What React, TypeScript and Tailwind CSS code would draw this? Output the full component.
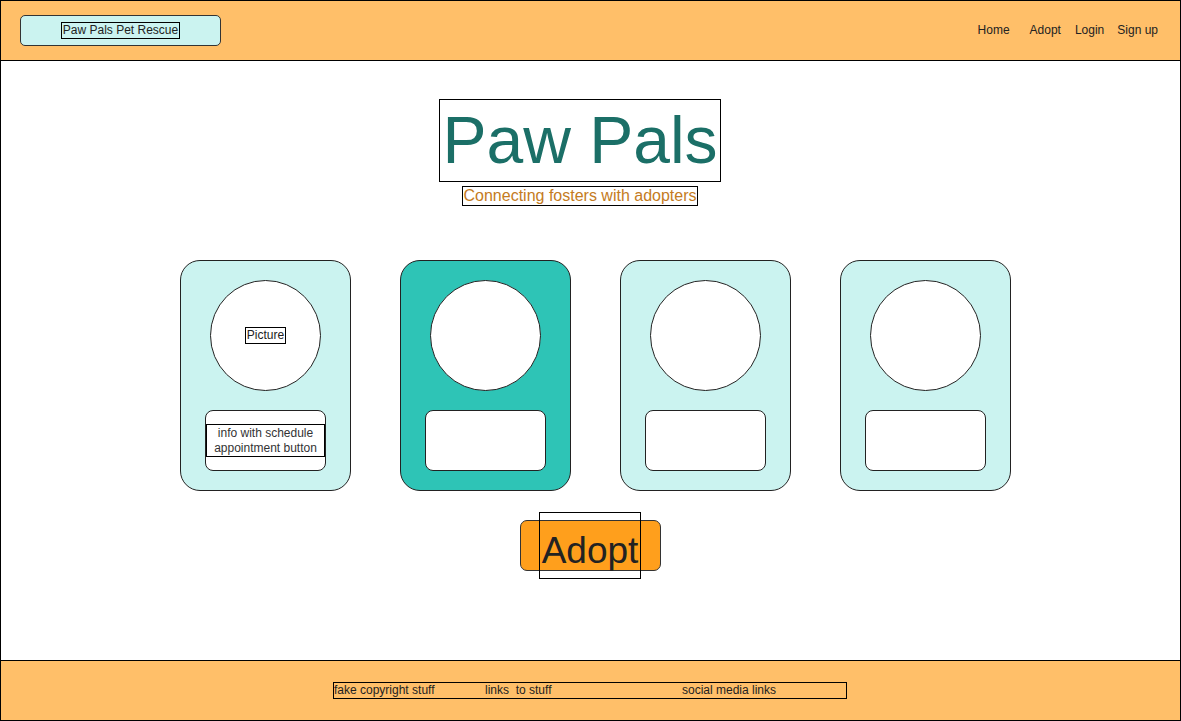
import React from 'react';

const navItems = [
  { label: 'Home', cls: 'mr-[20px]' },
  { label: 'Adopt', cls: 'mr-[14px]' },
  { label: 'Login', cls: 'mr-[13px]' },
  { label: 'Sign up', cls: '' },
];

function PetCard({ highlight, first }: { highlight?: boolean; first?: boolean }) {
  return (
    <div
      className={`w-[171px] h-[231px] rounded-[20px] border border-[#222] pt-[19px] flex flex-col items-center ${
        highlight ? 'bg-[#2ec4b6]' : 'bg-[#cbf3f0]'
      }`}
    >
      <div className="w-[111px] h-[111px] rounded-full border border-[#222] bg-white flex items-center justify-center">
        {first && (
          <span className="border border-black px-[1px] text-[12px] leading-[15px] text-[#222]">Picture</span>
        )}
      </div>
      <div className="mt-[19px] w-[121px] h-[61px] rounded-[8px] border border-[#222] bg-white flex items-center">
        {first && (
          <div className="w-full border border-black text-center text-[12px] leading-[15px] text-[#333] pt-[1px]">
            info with schedule
            <br />
            appointment button
          </div>
        )}
      </div>
    </div>
  );
}

export default function App() {
  return (
    <div
      className="w-[1181px] h-[721px] border border-black bg-white flex flex-col overflow-hidden"
      style={{ fontFamily: '"Liberation Sans", Arial, sans-serif' }}
    >
      {/* Header */}
      <header className="h-[60px] shrink-0 bg-[#ffbf69] border-b border-black flex items-center pl-[19px] pr-[22px]">
        <div className="w-[201px] h-[31px] rounded-[5px] border border-[#333] bg-[#cbf3f0] flex items-center justify-center">
          <span className="border border-black px-[1px] text-[12px] leading-[15px] text-[#222]">
            Paw Pals Pet Rescue
          </span>
        </div>
        <nav className="ml-auto flex items-center pb-[2px] text-[12px] text-[#222]">
          {navItems.map((item) => (
            <span key={item.label} className={item.cls}>
              {item.label}
            </span>
          ))}
        </nav>
      </header>

      {/* Main */}
      <main className="flex-1 flex flex-col">
        <div className="ml-[438px] mt-[38px] w-[282px] h-[83px] border border-black flex items-center justify-center">
          <h1 className="text-[66px] leading-[81px] text-[#1b6f67]">Paw Pals</h1>
        </div>
        <div className="ml-[461px] mt-[4px] w-[236px] h-[20px] border border-black flex items-center justify-center">
          <p className="text-[16px] leading-[18px] text-[#c47b22]">Connecting fosters with adopters</p>
        </div>

        <div className="ml-[179px] mt-[54px] flex gap-[49px]">
          <PetCard first />
          <PetCard highlight />
          <PetCard />
          <PetCard />
        </div>

        <div className="ml-[519px] mt-[29px]">
          <button className="relative w-[141px] h-[51px] rounded-[7px] border border-[#333] bg-[#ff9f1c]">
            <span className="absolute left-[18px] top-[-9px] w-[102px] h-[67px] border border-black flex items-center justify-center pt-[10px] text-[37px] leading-[40px] text-[#222]">
              Adopt
            </span>
          </button>
        </div>
      </main>

      {/* Footer */}
      <footer className="h-[60px] shrink-0 bg-[#ffbf69] border-t border-black flex items-center pl-[332px]">
        <div className="w-[514px] h-[17px] border border-black flex items-center text-[12px] leading-[15px] text-[#222] whitespace-pre">
          <span className="w-[151px]">fake copyright stuff</span>
          <span className="w-[197px]">links  to stuff</span>
          <span>social media links</span>
        </div>
      </footer>
    </div>
  );
}
